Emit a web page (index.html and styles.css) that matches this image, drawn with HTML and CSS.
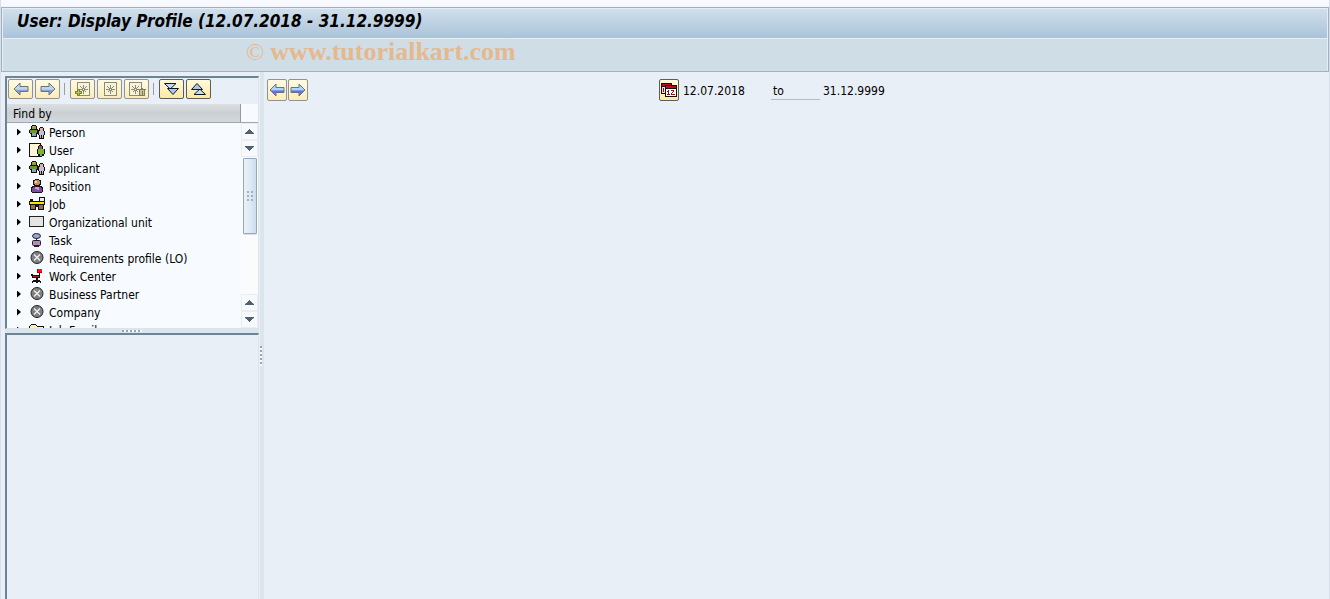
FILE: index.html
```html
<!DOCTYPE html>
<html lang="en">
<head>
<meta charset="utf-8">
<title>User: Display Profile</title>
<link rel="stylesheet" href="styles.css">
</head>
<body>
<svg class="defs" aria-hidden="true">
  <defs>
    <linearGradient id="blue" x1="0" y1="0" x2="0" y2="1"><stop offset="0" stop-color="#9cc4f0"/><stop offset=".45" stop-color="#a8e0fc"/><stop offset=".6" stop-color="#6868f4"/><stop offset="1" stop-color="#8080f8"/></linearGradient>
    <linearGradient id="soft" x1="0" y1="0" x2="0" y2="1"><stop offset="0" stop-color="#b8d0e4"/><stop offset=".5" stop-color="#b8dcec"/><stop offset=".65" stop-color="#8c90dc"/><stop offset="1" stop-color="#9c9cd8"/></linearGradient>
    <symbol id="arrow" viewBox="0 0 16 14"><path d="M1 7 7 1V4.500H15V9.500H7V13Z" stroke="#707078"/></symbol>
    <symbol id="sheet" viewBox="0 0 18 16"><path d="M3.500 1.500H15.500V14.500H3.500Z" fill="#fbf3d0" stroke="#8c8a7c"/><path d="M9.500 4V13M5 8.500H14M6.500 5.500l6 6M12.500 5.500l-6 6" stroke="#84898e" fill="none"/><path d="M9 8h1v1H9z" fill="#fff"/></symbol>
    <symbol id="people" viewBox="0 0 16 14">
      <path d="M3 0h4v1h1v3h1v1h1V3h1V2h3v1h1v3h1v4h-1v4h-5v-4H9V9H8v3H2V9H1V8H0V5h1V4h1V1h1z" fill="#101010"/>
      <path d="M3 1h4v3H3z" fill="#8ea23c"/><path d="M4 1h2v1H4z" fill="#c9a86c"/><path d="M1 5h7v3H1z" fill="#6d9632"/><path d="M3 8h4v3H3z" fill="#86a0cc"/><path d="M11 3h3v3h-3z" fill="#d6b19b"/><path d="M10 6h5v4h-5z" fill="#c1bde4"/><path d="M11 10h1v3h-1zM13 10h1v3h-1z" fill="#d5b69b"/>
    </symbol>
    <symbol id="user" viewBox="0 0 16 14"><path d="M.5.500h11v13H.5z" fill="#fff8d8" stroke="#111"/><path d="M10 2h3v1h1v3h2v5h-1v2h-2v1h-2v-1H9v-2H8V6h1V3h1z" fill="#111"/><path d="M10 3h3v3h-3z" fill="#8c643c"/><path d="M9 6h6v5h-2v2h-2v-2H9z" fill="#7ab82e"/></symbol>
    <symbol id="position" viewBox="0 0 16 14"><path d="M6 0h4v1h2v5h-1v1h2v1h1v5h-1v1H3v-1H2V8h1V7h2V6H4V1h2z" fill="#181418"/><path d="M6 1h4v1h1v3h-1v1H6V5H5V2h1z" fill="#c58f63"/><path d="M6 2h2v2H6z" fill="#efd0a8"/><path d="M4 8h8v1h1v4H3V9h1z" fill="#7f4b9a"/><path d="M6 8h4v3H8V10H6z" fill="#c7a4d8"/></symbol>
    <symbol id="job" viewBox="0 0 16 14"><path d="M10.500.500h5v4h-5z" fill="#fff" stroke="#111"/><path d="M1 2h3v2h12v4h-1v5H9v-3H7v3H1V8H0V4h1z" fill="#111"/><path d="M11 1h4v3h-4z" fill="#e8eef0"/><path d="M1 5h14v2H1z" fill="#f6e600"/><path d="M2 8h4v4H2zM10 8h4v4h-4z" fill="#95704f"/></symbol>
    <symbol id="org" viewBox="0 0 16 14"><path d="M.5 1.500h14v10H.5z" fill="#e4e4e4" stroke="#222"/></symbol>
    <symbol id="task" viewBox="0 0 16 14"><path d="M7.500 5v4M5 13.500h5" stroke="#222"/><ellipse cx="7.500" cy="3" rx="4" ry="2.500" fill="#9ba3dc" stroke="#222"/><rect x="3.500" y="7.500" width="8" height="5" rx="1" fill="#b58abf" stroke="#222"/></symbol>
    <symbol id="cross" viewBox="0 0 16 14"><circle cx="8" cy="6.500" r="6" fill="#808080" stroke="#222"/><path d="M5 3.500l6 6M11 3.500l-6 6" stroke="#f2f2f2" stroke-width="1.300"/></symbol>
    <symbol id="chair" viewBox="0 0 16 14"><path d="M8 0h5v4H8z" fill="#a00"/><path d="M9 0h4v3H9z" fill="#f01818"/><path d="M2 5h2v1h6V4h1v5H9v2h2v1h1v2h-1v-1H9v1H7v-1H4v1H3v-2h1v-1h3V9H3V7H2z" fill="#111"/><path d="M4 7h6v1H4z" fill="#a22"/></symbol>
    <symbol id="folder" viewBox="0 0 16 14"><path d="M.5 3.500l2-2h4l2 2h6v9H.5z" fill="#fff3a6" stroke="#111"/></symbol>
    <symbol id="up" viewBox="0 0 9 5"><path d="M4 0h1v1h1v1h1v1h2v2H0V3h2V2h1V1h1z" fill="#4c6271"/><path d="M0 3h1v1H0zM8 3h1v1H8z" fill="#cbd3d9"/></symbol>
    <symbol id="dbl" viewBox="0 0 17 14"><path d="M1.500 1.500H13L7.200 7z" fill="#c4dcf6" stroke="#101820"/><path d="M4.500 6.500H15.500L10 12.500z" fill="#a8c8ee" stroke="#101820"/></symbol>
  </defs>
</svg>
<div class="app">
  <header class="header">
    <h1 class="title">User: Display Profile (12.07.2018 - 31.12.9999)</h1>
    <div class="app-toolbar"><span class="copy">©</span> <span class="site">www.tutorialkart.com</span></div>
  </header>
  <main class="main">
    <aside class="side">
      <section class="pane search">
        <div class="tools">
          <button class="btn dim" aria-label="Back"><svg class="i-arrow soft"><use href="#arrow"/></svg></button>
          <button class="btn dim" aria-label="Forward"><svg class="i-arrow soft flip"><use href="#arrow"/></svg></button>
          <span class="sep"></span>
          <button class="btn dim" aria-label="Create search variant"><svg class="i-sheet" viewBox="0 0 18 16"><use href="#sheet" width="18" height="16"/><path d="M3 8h2v2h2v2H5v2H3v-2H1v-2h2z" fill="#bccb50" stroke="#7c8044"/></svg></button>
          <button class="btn dim" aria-label="Search variant"><svg class="i-sheet"><use href="#sheet"/></svg></button>
          <button class="btn dim" aria-label="Delete search variant"><svg class="i-sheet" viewBox="0 0 18 16"><use href="#sheet" x="-2" width="18" height="16"/><path d="M11.500 8.500h5v6h-5zM10 8.500h8M13 7.500h2M14.500 10v4" fill="#c8c19c" stroke="#817b60"/></svg></button>
          <span class="sep"></span>
          <button class="btn" aria-label="Expand"><svg class="i-dbl"><use href="#dbl"/></svg></button>
          <button class="btn" aria-label="Collapse"><svg class="i-dbl turn"><use href="#dbl"/></svg></button>
        </div>
        <div class="find">
          <div class="column">
            <h2 class="find-title">Find by</h2>
            <ul class="tree">
              <li class="node"><svg class="icon"><use href="#people"/></svg>Person</li>
              <li class="node"><svg class="icon"><use href="#user"/></svg>User</li>
              <li class="node"><svg class="icon"><use href="#people"/></svg>Applicant</li>
              <li class="node"><svg class="icon"><use href="#position"/></svg>Position</li>
              <li class="node"><svg class="icon"><use href="#job"/></svg>Job</li>
              <li class="node"><svg class="icon"><use href="#org"/></svg>Organizational unit</li>
              <li class="node"><svg class="icon smooth"><use href="#task"/></svg>Task</li>
              <li class="node"><svg class="icon smooth"><use href="#cross"/></svg>Requirements profile (LO)</li>
              <li class="node"><svg class="icon"><use href="#chair"/></svg>Work Center</li>
              <li class="node"><svg class="icon smooth"><use href="#cross"/></svg>Business Partner</li>
              <li class="node"><svg class="icon smooth"><use href="#cross"/></svg>Company</li>
              <li class="node"><svg class="icon"><use href="#folder"/></svg>Job Family</li>
            </ul>
          </div>
          <div class="scroll">
            <div class="corner"></div>
            <button class="step" aria-label="Scroll up"><svg class="i-step"><use href="#up"/></svg></button>
            <button class="step" aria-label="Scroll down"><svg class="i-step turn"><use href="#up"/></svg></button>
            <div class="track"><div class="thumb"><span class="grip"></span></div></div>
            <button class="step" aria-label="Page up"><svg class="i-step"><use href="#up"/></svg></button>
            <button class="step" aria-label="Page down"><svg class="i-step turn"><use href="#up"/></svg></button>
          </div>
        </div>
      </section>
      <div class="split-h"><span class="dots-h"></span></div>
      <section class="pane results"></section>
    </aside>
    <div class="split-v"><span class="dots-v"></span></div>
    <section class="detail">
      <button class="btn square dim" aria-label="Previous"><svg class="i-arrow"><use href="#arrow"/></svg></button>
      <button class="btn square dim" aria-label="Next"><svg class="i-arrow flip"><use href="#arrow"/></svg></button>
      <div class="period">
        <button class="btn square" aria-label="Change period"><svg class="i-cal" viewBox="0 0 16 16"><path d="M0 1h11v11H0z" fill="#111"/><path d="M1 2h9v2H1z" fill="#c00820"/><path d="M1 5h3v6H1z" fill="#f8dcd8"/><path d="M2 6h1v4H2z" fill="#8c1018"/><path d="M4 3h12v12H4z" fill="#111"/><path d="M5 4h10v2H5z" fill="#c00820"/><path d="M5 7h10v7H5z" fill="#fff"/><path d="M7 8h1v5H7zM6 9h1v1H6zM6 12h3v1H6zM10 8h3v1h-3zM12 9h1v1h-1zM11 10h1v1h-1zM10 11h1v1h-1zM10 12h4v1h-4z" fill="#8c1018"/></svg></button>
        <span class="date">12.07.2018</span>
        <span class="to">to</span>
        <span class="date">31.12.9999</span>
      </div>
    </section>
  </main>
</div>
</body>
</html>
```
FILE: styles.css
```css
* { box-sizing: border-box; }
body {
  margin: 0;
  background: #e8eff6;
  color: #000;
  font: 12px/18px "DejaVu Sans Condensed", Tahoma, "Noto Sans", sans-serif;
}
svg { display: block; shape-rendering: crispEdges; }
.defs { position: absolute; width: 0; height: 0; }
button { font: inherit; padding: 0; }
h1, h2, ul { margin: 0; padding: 0; }

.app {
  display: flex;
  flex-direction: column;
  min-height: 100vh;
  padding-top: 7px;
  border-left: 1px solid #d9deea;
  border-right: 1px solid #d9deea;
  background: linear-gradient(#f8f9fe 6px, #e8eff6 7px);
}
.header {
  border: 1px solid #9eb1c2;
  background: #cfdde7;
  box-shadow: inset 1px 1px #e6eef5, inset -1px 0 #e6eef5;
}
.title {
  height: 30px;
  padding-left: 14px;
  margin: 1px 1px 0;
  background: linear-gradient(#d0dfeb, #aac3da);
  border-bottom: 1px solid #e6eef5;
  font: italic bold 17px/24px "DejaVu Sans Condensed", Tahoma, "Noto Sans", sans-serif;
}
.app-toolbar {
  height: 32px;
  padding-left: 244px;
  color: #e5b98d;
  font: 24px/26px "Liberation Serif", serif;
}
.site { font-size: 26px; font-weight: bold; }

.main { display: flex; flex: 1; }
.side {
  display: flex;
  flex-direction: column;
  width: 259px;
  padding: 4px 1px 0 4px;
}
.pane {
  border: 2px solid #6d8494;
  border-right: 1px solid #dce5ec;
  border-bottom: 1px solid #dce5ec;
}
.results { flex: 1; border-bottom: 0; }
.tools { display: flex; gap: 2px; height: 26px; padding: 1px; }
.btn {
  display: grid;
  place-items: center;
  width: 25px;
  height: 20px;
  border: 1px solid #5c5c5c;
  border-radius: 2px;
  background: linear-gradient(#fffbe0, #ffe99d);
}
.btn.dim { border-color: #94928a; background: linear-gradient(#fffbe4, #f9edb9); }
.btn.square { width: 20px; height: 22px; }
.sep { width: 1px; height: 12px; margin: 4px 3px 0 2px; background: #98a0a4; }
.i-arrow { width: 16px; height: 14px; fill: url(#blue); shape-rendering: auto; }
.soft { fill: url(#soft); }
.flip { transform: scaleX(-1); }
.turn { transform: rotate(180deg); }
.i-sheet { width: 18px; height: 16px; }
.i-dbl { width: 17px; height: 14px; shape-rendering: auto; }
.i-cal { width: 16px; height: 16px; }

.find { display: flex; background: #f7fbff; }
.column { flex: 1; min-width: 0; }
.find-title {
  height: 19px;
  padding: 1px 0 0 6px;
  border-right: 1px solid #8e9ca7;
  border-bottom: 1px solid #9daab5;
  background: linear-gradient(#dcdfe2, #cbd0d3 50%, #d3d8db);
  font: inherit;
}
.tree { height: 205px; padding-top: 1px; overflow: hidden; list-style: none; }
.node { display: flex; align-items: center; height: 18px; }
.node::before {
  content: "";
  width: 4px;
  height: 7px;
  margin: 0 8px 2px 10px;
  background: #000;
  clip-path: polygon(0 0, 100% 50%, 0 100%);
}
.icon { width: 16px; height: 14px; margin: 0 4px 2px 0; }
.smooth { shape-rendering: auto; }

.scroll { display: flex; flex-direction: column; width: 17px; background: #eff2f6; }
.corner { height: 19px; border-bottom: 1px solid #9daab5; background: #f7fbff; }
.step {
  display: grid;
  place-items: center;
  height: 17px;
  border: 1px solid #eaedf1;
  background: #f7f9fc;
}
.i-step { width: 9px; height: 5px; }
.track { flex: 1; padding: 1px 1px 1px 2px; background: #fafcfb; }
.thumb {
  display: grid;
  place-items: center;
  height: 76px;
  border: 1px solid #95a8b8;
  border-radius: 1px;
  background: linear-gradient(90deg, #e9f1f9, #dfeaf4 50%, #cbdcec);
  box-shadow: 0 1px #dce0e4;
}
.grip {
  width: 6px;
  height: 10px;
  background: repeating-linear-gradient(#a4b0bb 0 2px, transparent 2px 4px);
  clip-path: polygon(0 0, 2px 0, 2px 100%, 4px 100%, 4px 0, 100% 0, 100% 100%, 0 100%);
}
.split-h { display: grid; place-items: center; height: 4px; background: #dbe5ec; }
.split-v { width: 4px; padding-top: 274px; background: #dbe5ec; }
.dots-h { width: 20px; height: 2px; background: repeating-linear-gradient(90deg, #94a6b5 0 2px, #f7fbff 2px 4px); }
.dots-v { display: block; width: 2px; height: 20px; background: repeating-linear-gradient(#94a6b5 0 2px, #f7fbff 2px 4px); }

.detail { display: flex; flex: 1; gap: 1px; padding: 7px 0 0 3px; }
.period { display: flex; flex: 1; align-items: flex-start; padding-left: 350px; }
.date { width: 88px; padding: 3px 0 0 4px; }
.to { width: 49px; height: 21px; margin: 0 -1px 0 4px; padding: 3px 0 0 2px; border-bottom: 1px solid #b6bcc1; }
```
